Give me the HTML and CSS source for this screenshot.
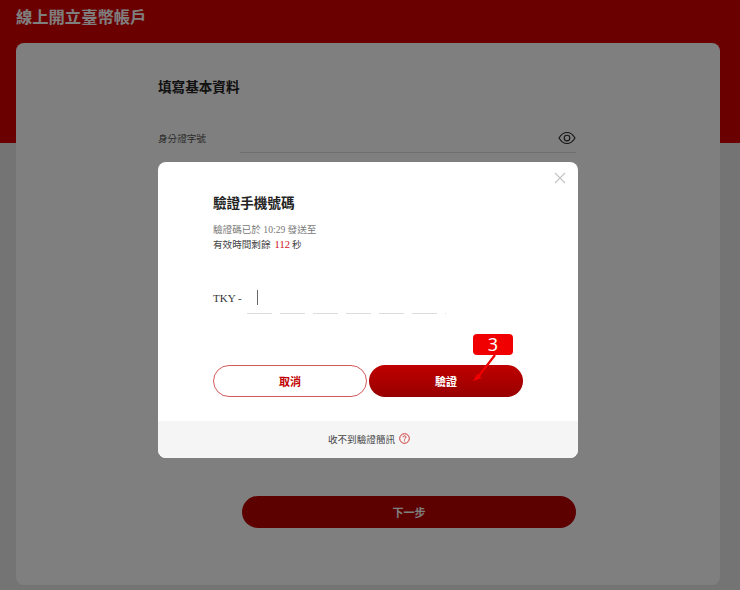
FILE: index.html
```html
<!DOCTYPE HTML>
<html lang="zh-Hant">
  <head>
    <title>線上開立臺幣帳戶</title>
    <meta charset="utf-8">
    <link rel="stylesheet" href="styles.css">
  </head>
  <body>

  <div class="page">
    <h1 class="page-title">線上開立臺幣帳戶</h1>

    <div class="card">
      <h2 class="card-title">填寫基本資料</h2>
      <div class="field">
        <span class="field-label">身分證字號</span>
        <span class="field-line"></span>
        <svg class="eye" width="18" height="14" viewBox="0 0 18 14" fill="none" stroke="#2a2a2a" stroke-width="1.15">
          <path d="M1 7C3.2 3.3 5.8 1.5 9 1.5S14.8 3.3 17 7C14.8 10.7 12.2 12.5 9 12.5S3.2 10.7 1 7Z"/>
          <circle cx="9" cy="7" r="2.8"/>
        </svg>
      </div>
      <button class="next">下一步</button>
    </div>
  </div>

  <div class="overlay"></div>

  <div class="modal">
    <svg class="close" width="12" height="12" viewBox="0 0 12 12" stroke="#c4c4c4" stroke-width="1.1">
      <path d="M1 1L11 11M11 1L1 11"/>
    </svg>

    <div class="modal-body">
      <h3 class="modal-title">驗證手機號碼</h3>
      <p class="sent">驗證碼已於 10:29 發送至</p>
      <p class="timer">有效時間剩餘<span class="secs">112</span>秒</p>

      <div class="code">
        <span class="prefix">TKY -</span>
        <div class="cells">
          <span class="cell"><i class="cursor"></i></span>
          <span class="cell"></span>
          <span class="cell"></span>
          <span class="cell"></span>
          <span class="cell"></span>
          <span class="cell"></span>
          <span class="cell-end"></span>
        </div>
      </div>

      <div class="actions">
        <button class="btn btn-cancel">取消</button>
        <button class="btn btn-verify">驗證</button>
      </div>
    </div>

    <div class="modal-foot">
      <span class="foot-text">收不到驗證簡訊</span>
      <svg width="11" height="11" viewBox="0 0 11 11" fill="none" stroke="#c33" stroke-width="1">
        <circle cx="5.5" cy="5.5" r="4.8"/>
        <path d="M4 4.3C4 3.4 4.7 2.9 5.5 2.9S7 3.4 7 4.2C7 5.2 5.5 5.3 5.5 6.5M5.5 7.4V8.3"/>
      </svg>
    </div>

    <div class="step">3</div>
    <svg class="arrow" width="30" height="32" viewBox="0 0 30 32" fill="none">
      <path d="M24 1L7 23" stroke="#f00000" stroke-width="2.2"/>
      <path d="M2 27L11 24L6 20Z" fill="#f00000"/>
    </svg>
  </div>

  </body>
</html>
```

FILE: styles.css
```css
html, body {
  height: 100%;
}
body {
  margin: 0;
  overflow: hidden;
  font-family: "Liberation Serif", "Noto Sans CJK TC", serif;
  color: #222;
}

.page {
  height: 590px;
  box-sizing: border-box;
  padding: 0 20px 0 16px;
  background: linear-gradient(#d60000 143px, #e8e8e8 143px);
}

.page-title {
  margin: 0;
  height: 43px;
  padding-top: 6px;
  box-sizing: border-box;
  font-size: 16.3px;
  line-height: 24px;
  font-weight: 700;
  color: #fff;
}

.card {
  height: 542px;
  box-sizing: border-box;
  padding: 34px 144px 0 142px;
  background: #fff;
  border-radius: 8px;
}

.card-title {
  margin: 0;
  font-size: 13.6px;
  line-height: 21px;
  font-weight: 700;
}

.field {
  display: flex;
  align-items: center;
  height: 31px;
  margin-top: 24px;
  position: relative;
}
.field-label {
  font-size: 9.6px;
  color: #555;
}
.field-line {
  position: absolute;
  left: 82px;
  right: 0;
  bottom: 0;
  border-bottom: 1px solid #ddd;
}
.eye {
  margin-left: auto;
}

.next {
  display: block;
  width: 334px;
  height: 32px;
  margin: 343px 0 0 84px;
  border: 0;
  border-radius: 16px;
  background: #b80000;
  color: #fff;
  font: 700 11px "Liberation Serif", "Noto Sans CJK TC", serif;
}

.overlay {
  position: absolute;
  left: 0;
  top: 0;
  right: 0;
  bottom: 0;
  background: rgba(0,0,0,0.5);
}

.modal {
  position: absolute;
  left: 158px;
  top: 162px;
  width: 420px;
  height: 296px;
  background: #fff;
  border-radius: 8px;
  overflow: hidden;
}

.close {
  position: absolute;
  right: 12px;
  top: 10px;
}

.modal-body {
  height: 259px;
  box-sizing: border-box;
  padding: 31px 55px 0;
}

.modal-title {
  margin: 0 0 8px;
  font-size: 13.6px;
  line-height: 21px;
  font-weight: 700;
}
.sent, .timer {
  margin: 0;
  font-size: 9.6px;
  line-height: 15px;
}
.sent {
  color: #777;
}
.timer {
  color: #444;
}
.secs {
  margin: 0 2px 0 4px;
  font-size: 10.5px;
  color: #d0101c;
}

.code {
  display: flex;
  align-items: flex-start;
  margin-top: 38px;
}
.prefix {
  width: 34px;
  font-size: 11px;
  line-height: 16px;
  color: #333;
}
.cells {
  display: flex;
  gap: 8px;
}
.cell {
  display: block;
  width: 25px;
  height: 23px;
  border-bottom: 1px solid #ddd;
}
.cell-end {
  width: 1px;
  height: 23px;
  border-bottom: 1px solid #ddd;
}
.cursor {
  display: block;
  width: 1px;
  height: 15px;
  margin: 0 0 0 10px;
  background: #666;
}

.actions {
  display: flex;
  justify-content: space-between;
  margin-top: 51px;
}
.btn {
  width: 154px;
  height: 32px;
  box-sizing: border-box;
  border-radius: 16px;
  font: 700 11px "Liberation Serif", "Noto Sans CJK TC", serif;
}
.btn-cancel {
  background: #fff;
  border: 1px solid #d25a5a;
  color: #c00000;
}
.btn-verify {
  border: 0;
  background: linear-gradient(#bf0000, #970000);
  color: #fff;
}

.modal-foot {
  display: flex;
  align-items: center;
  justify-content: center;
  gap: 4px;
  height: 37px;
  padding: 0 0 2px 2px;
  box-sizing: border-box;
  background: #f5f5f5;
  font-size: 9.6px;
  color: #444;
}

.step {
  position: absolute;
  left: 315px;
  top: 172px;
  width: 40px;
  height: 21px;
  border-radius: 4px;
  background: #f00000;
  color: #fff;
  font: 18px/21px "Noto Sans", sans-serif;
  text-align: center;
}
.arrow {
  position: absolute;
  left: 313px;
  top: 192px;
}
```
